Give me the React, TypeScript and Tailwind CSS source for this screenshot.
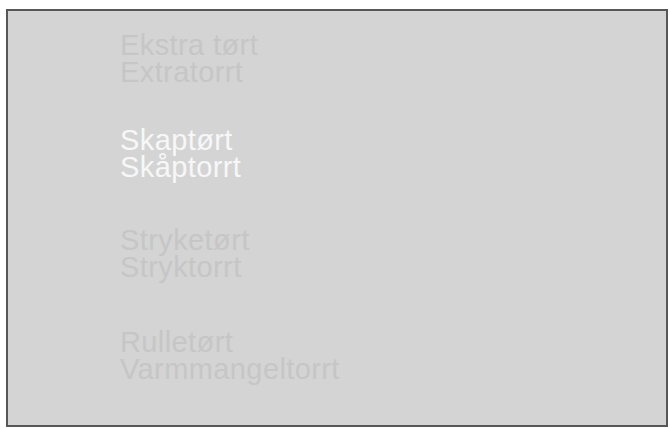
import React from 'react';

type Option = { no: string; sv: string; active?: boolean; gap: string };

const options: Option[] = [
    { no: 'Ekstra tørt', sv: 'Extratorrt', gap: 'mt-0' },
    { no: 'Skaptørt', sv: 'Skåptorrt', active: true, gap: 'mt-[41px]' },
    { no: 'Stryketørt', sv: 'Stryktorrt', gap: 'mt-[46px]' },
    { no: 'Rulletørt', sv: 'Varmmangeltorrt', gap: 'mt-[48px]' },
];

const App: React.FC = () => {
    return (
        <div className="w-[670px] h-[429px] bg-white pt-[9px] pl-[6px] overflow-hidden">
            <div
                className="w-[662px] h-[418px] border-2 border-[#575757] bg-[#d4d4d4] pt-[21px] pl-[112px] flex flex-col"
                style={{ fontFamily: '"Liberation Sans", Arial, sans-serif' }}
            >
                {options.map(opt => (
                    <div
                        key={opt.no}
                        className={`${opt.gap} text-[29px] leading-[27px] tracking-[0.4px] ${opt.active ? 'text-[#f7f7f7]' : 'text-[#c6c6c6]'}`}
                    >
                        <div>{opt.no}</div>
                        <div>{opt.sv}</div>
                    </div>
                ))}
            </div>
        </div>
    );
};

export default App;
